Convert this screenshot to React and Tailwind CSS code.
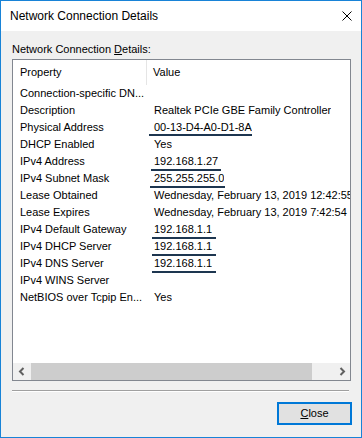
import React from 'react'

const ROWS = [
  { k: 'Connection-specific DN...', v: '' },
  { k: 'Description', v: 'Realtek PCIe GBE Family Controller' },
  { k: 'Physical Address', v: '00-13-D4-A0-D1-8A', line: 'left-[136px] w-[103px] bottom-0' },
  { k: 'DHCP Enabled', v: 'Yes' },
  { k: 'IPv4 Address', v: '192.168.1.27', line: 'left-[138px] w-[70px] bottom-[-1px]' },
  { k: 'IPv4 Subnet Mask', v: '255.255.255.0', line: 'left-[137px] w-[75px] bottom-[-1px]' },
  { k: 'Lease Obtained', v: 'Wednesday, February 13, 2019 12:42:55 PM' },
  { k: 'Lease Expires', v: 'Wednesday, February 13, 2019 7:42:54 PM' },
  { k: 'IPv4 Default Gateway', v: '192.168.1.1', line: 'left-[139px] w-[64px] bottom-[-1px]' },
  { k: 'IPv4 DHCP Server', v: '192.168.1.1', line: 'left-[139px] w-[64px] bottom-[-1px]' },
  { k: 'IPv4 DNS Server', v: '192.168.1.1', line: 'left-[139px] w-[64px] bottom-[-1px]' },
  { k: 'IPv4 WINS Server', v: '' },
  { k: 'NetBIOS over Tcpip En...', v: 'Yes' },
]

function Chevron({ dir }) {
  return (
    <svg width="8" height="9" viewBox="0 0 8 9">
      <path d={dir === 'left' ? 'M5.5 1 L2 4.5 L5.5 8' : 'M2.5 1 L6 4.5 L2.5 8'} fill="none" stroke="#606060" strokeWidth="2" />
    </svg>
  )
}

export default function App() {
  return (
    <div className="w-[362px] h-[438px] border border-[#1883d7] bg-[#f0f0f0] flex flex-col text-black font-['Liberation_Sans',Arial,sans-serif] overflow-hidden">
      <div className="h-[30px] shrink-0 bg-white flex items-center justify-between pl-[9px] pr-[9px]">
        <span className="text-[12px]">Network Connection Details</span>
        <svg width="10" height="10" viewBox="0 0 10 10">
          <path d="M0.5 0.5 L9.5 9.5 M9.5 0.5 L0.5 9.5" stroke="#000" strokeWidth="1" />
        </svg>
      </div>

      <div className="flex-1 flex flex-col pl-[11px] pr-[10px] text-[11px]">
        <div className="mt-[12px] h-[13px] leading-[13px]">
          Network Connection <span className="underline">D</span>etails:
        </div>

        <div className="mt-[3px] h-[322px] border border-[#828790] bg-white flex flex-col overflow-hidden">
          <div className="h-[25px] shrink-0 flex items-center">
            <div className="w-[134px] pl-[7px] h-full flex items-center border-r border-[#e5e5e5]">Property</div>
            <div className="pl-[6px]">Value</div>
          </div>
          <div className="flex-1">
            {ROWS.map(r => (
              <div key={r.k} className="relative h-[17px] leading-[17px] flex whitespace-nowrap">
                <div className="w-[134px] shrink-0 pl-[7px] overflow-hidden">{r.k}</div>
                <div className="pl-[7px] overflow-hidden">{r.v}</div>
                {r.line && <div className={`absolute h-[2px] bg-[#1d3650] ${r.line}`} />}
              </div>
            ))}
          </div>
          <div className="h-[17px] shrink-0 bg-[#f0f0f0] flex items-center">
            <div className="w-[17px] h-full flex items-center justify-center"><Chevron dir="left" /></div>
            <div className="ml-[1px] w-[281px] h-full bg-[#cdcdcd]" />
            <div className="flex-1" />
            <div className="w-[17px] h-full flex items-center justify-center"><Chevron dir="right" /></div>
          </div>
        </div>

        <div className="mt-[9px] w-[337px] h-[1px] bg-[#a0a0a0]" />
        <div className="w-[337px] h-[1px] bg-white" />

        <div className="mt-[10px] flex justify-end mr-[-1px]">
          <button className="w-[75px] h-[23px] border-2 border-[#0078d7] bg-[#e1e1e1] text-[11px] leading-none">
            <span className="underline">C</span>lose
          </button>
        </div>
      </div>
    </div>
  )
}
